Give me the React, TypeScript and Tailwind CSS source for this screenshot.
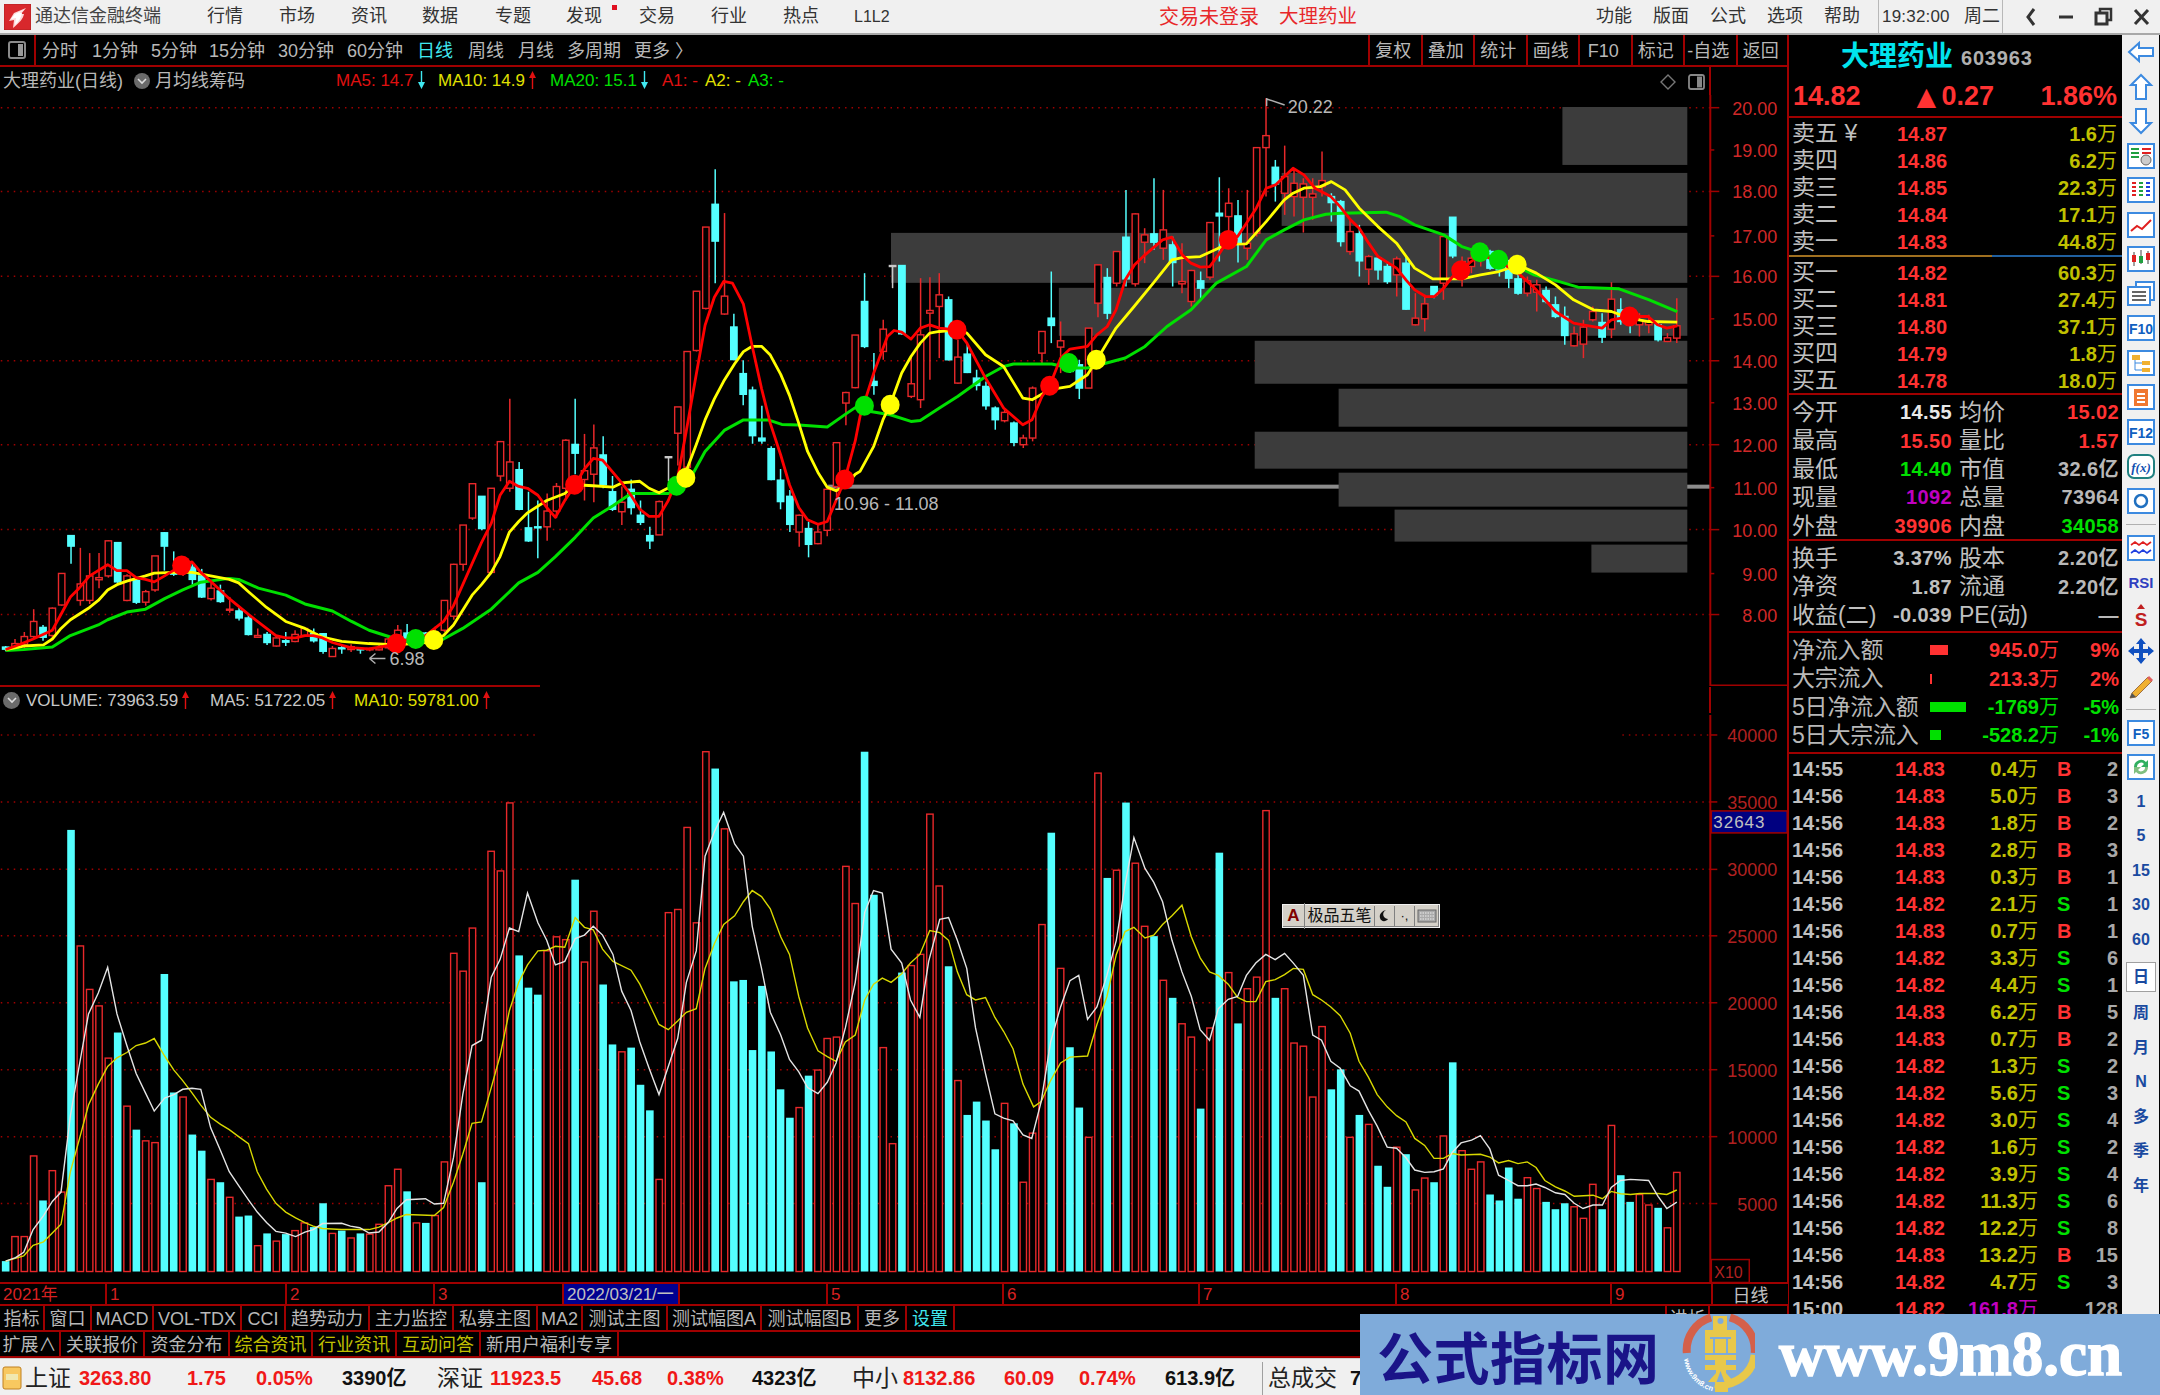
import React from "react";

const FONT = "[font-family:'Liberation_Sans','Noto_Sans_CJK_SC',sans-serif]";

// volume bar tops, negative = cyan (falling day)
const V1 = [-1515,1445,1445,1215,-1342,1257,1318,-285,616,740,787,936,-863,1073,-1140,1172,1177,-696,-1034,1047,-1154,-1200,1282,-1290,1333,-1388,-1385,1471,-1436,1458,-1438,1428,1406,-1418,-1350,1436,-1428,1449,-1436,1438,1410,1300,1253,-1316,1406,-1406,1385,1232,637,688,565,-1290,346,402,208,-643,-735,-755,630,590,598,-427,662,517,-726,-897,918,-906,-1012,-1085,1282,521,512,278,550,62,-110,282,-717,-713,-913,-730,-917,-1025,-1106,1077,-986,970,880,876,389,495];
const V2 = [-62,-470,906,1180,-692,672,640,240,445,-674,1000,-1098,-1060,-1114,-1196,1065,-1122,1290,1150,555,-293,680,-905,-1077,1162,123,-422,400,-207,380,560,-588,714,-764,838,876,-1080,850,-350,692,-837,738,705,230,-764,738,893,902,1047,846,-1025,-968,1162,-1098,1125,-1243,-1303,1190,-1210,1312,1278,-1290,1158,-948,1200,1253,1232,-1325,-1342,-1248,-1337,1277,1308,-1346,-1367,-1350,1360,1393,1296,-1367,1128,-1270,-1346,1325,1355,-1363,1420,1262];
const VOL = [...V1, ...V2];
const barX = (i: number) => 4.9 + i * 9.344;

// candles: high, body top, body bottom, low
const C1 = [[1415,1418,1424,1430],[1395,1408,1425,1428],[1375,1388,1410,1420],[1310,1345,1388,1395],[1355,1362,1390,1400],[1305,1307,1385,1395],[1208,1208,1298,1300],[1100,1100,1130,1180],[1135,1238,1285,1300],[1150,1215,1285,1295],[1150,1220,1226,1250],[1113,1115,1215,1220],[1120,1120,1232,1235],[1210,1215,1285,1287],[1225,1228,1290,1295],[1255,1260,1290,1300],[1158,1158,1255,1260],[1090,1092,1130,1200],[1145,1205,1210,1215],[1165,1170,1205,1215],[1180,1190,1225,1240],[1195,1215,1275,1278],[1235,1250,1280,1285],[1240,1258,1288,1292],[1275,1310,1313,1320],[1305,1315,1335,1342],[1325,1335,1382,1385],[1365,1385,1390,1392],[1375,1382,1405,1412],[1385,1392,1415,1417],[1375,1400,1404,1415],[1370,1382,1402,1404],[1362,1365,1385,1388],[1365,1380,1400,1405],[1378,1380,1430,1437],[1415,1422,1445,1445],[1410,1420,1423,1437],[1410,1417,1425,1432],[1420,1423,1426,1437],[1420,1422,1426,1430],[1410,1420,1426,1428],[1390,1395,1420,1425],[1355,1370,1410,1420],[1352,1378,1400,1405],[1375,1380,1395,1405],[1375,1378,1400,1405],[1360,1375,1395,1400],[1285,1285,1370,1375],[1180,1182,1330,1340],[1070,1070,1182,1200],[950,952,1050,1055],[988,988,1080,1085],[965,965,1205,1210],[830,832,930,945],[710,890,965,975],[890,912,1025,1028],[975,1078,1115,1118],[1000,1075,1078,1165],[980,1030,1075,1115],[950,960,1030,1050],[825,828,965,1000],[710,840,865,925],[810,915,940,1000],[783,850,925,1005],[817,870,955,965],[930,975,1025,1030],[960,1005,1032,1070],[940,968,1020,1040],[1000,1042,1062,1070],[1075,1100,1115,1138],[1000,1003,1098,1098],[875,875,877,945],[733,733,808,900],[575,575,905,910],[403,403,572,575],[220,220,452,455],[55,155,260,380],[180,417,468,470],[467,505,598,600],[600,638,697,728],[675,685,815,838],[730,822,830,838],[845,852,940,942],[910,942,1003,1025],[970,988,1068,1090],[1040,1042,1090,1132],[1060,1080,1125,1162],[1070,1090,1123,1125],[965,968,1085,1102],[835,835,960,990],[690,692,722,785],[528,528,678,680]];
const C2 = [[580,665,800,805],[820,905,917,945],[720,748,815,840],[557,557,558,625],[557,557,762,765],[830,912,950,955],[595,765,960,985],[592,692,700,900],[580,645,680,835],[650,660,840,842],[780,832,910,912],[790,823,878,880],[870,895,917,932],[905,920,978,990],[980,985,1020,1050],[985,998,1023,1028],[1025,1030,1088,1100],[1065,1075,1095,1105],[920,925,1075,1085],[755,755,820,855],[575,715,737,790],[725,783,802,880],[825,830,875,880],[840,855,925,958],[745,745,925,925],[555,555,670,712],[565,593,700,718],[515,515,610,620],[330,472,597,620],[400,402,612,620],[445,465,487,550],[295,462,487,510],[330,450,505,540],[470,495,548,620],[490,605,612,640],[570,572,665,680],[575,603,625,660],[428,428,592,600],[292,400,408,545],[325,370,410,465],[360,408,490,548],[330,490,505,540],[203,203,460,470],[55,167,203,350],[240,262,312,365],[197,290,340,405],[265,310,350,410],[295,312,352,458],[295,342,352,420],[215,302,320,350],[340,350,368,425],[360,365,485,500],[420,455,515,525],[435,462,543,590],[525,530,568,615],[530,535,570,600],[550,560,605,612],[530,537,585,650],[530,550,688,690],[640,715,735,737],[645,672,717,755],[620,620,645,655],[470,470,610,660],[412,412,528,535],[530,545,590,620],[510,535,560,580],[500,510,540,560],[510,515,565,570],[520,525,570,590],[540,560,595,625],[560,597,640,645],[590,603,640,650],[600,615,637,695],[620,632,665,670],[650,675,710,715],[680,710,767,795],[740,762,798,800],[720,742,793,835],[680,695,720,725],[700,728,772,790],[607,658,748,775],[655,690,725,735],[700,710,720,760],[700,720,735,770],[705,725,735,760],[730,735,780,785],[760,774,785,787],[655,738,775,790]];

const zx6 = (x: number) => x / 1.823;
const zy6 = (y: number) => 150 + y / 2.85;
const zx7 = (x: number) => 860 + x / 1.823;
const zy7 = (y: number) => 80 + y / 3;
const zy8 = (y: number) => 730 + y / 2.85;
const zx9 = (x: number) => 860 + x / 1.704;

const pts = (a: number[], fx: (n: number) => number, fy: (n: number) => number) => {
  let s = "";
  for (let i = 0; i < a.length; i += 2) s += `${fx(a[i]).toFixed(1)},${fy(a[i + 1]).toFixed(1)} `;
  return s;
};

const MA5 = pts([9,1425,27,1415,59,1395,94,1370,127,1275,143,1250,162,1215,195,1183,212,1200,230,1200,247,1220,264,1225,280,1232,299,1215,330,1185,349,1175,365,1205,383,1230,417,1280,452,1325,485,1365,502,1385,520,1392,538,1392,555,1385,570,1385,587,1392,605,1405,638,1420,672,1423,722,1410,740,1398,775,1385,808,1345,826,1300,860,1180,877,1120,895,1065,911,985,928,945,945,960,961,965,980,985,996,1020,1012,1048,1029,1000,1048,955,1065,910,1081,880,1098,885,1117,920,1133,950,1150,985,1166,1025,1183,1045,1201,1045,1218,1000,1235,935,1251,800,1269,640,1285,500,1302,420,1319,375,1335,380,1355,440,1371,560,1388,680,1404,780,1423,870,1439,955,1456,1020,1472,1055,1491,1068,1508,1060,1524,1000,1540,940,1559,830], zx6, zy6)
  + pts([0,1010,25,880,50,770,62,752,76,757,93,778,110,745,127,735,145,745,177,750,195,790,229,895,262,985,297,1035,314,1020,332,950,346,918,366,835,383,808,415,800,432,765,451,740,467,690,484,600,501,555,520,525,552,480,569,472,588,525,604,550,621,562,638,560,654,525,672,480,689,470,705,430,723,385,741,325,758,315,790,265,810,285,830,325,859,350,876,380,895,420,911,445,928,490,945,530,979,565,996,600,1012,630,1032,650,1048,650,1065,625,1081,590,1098,570,1115,545,1132,525,1166,545,1201,580,1234,630,1269,695,1302,730,1319,735,1354,745,1371,720,1404,710,1438,710,1455,735,1472,745,1491,738], zx7, zy7);
const MA10 = pts([9,1425,42,1415,78,1412,94,1395,110,1365,127,1340,162,1305,178,1285,195,1255,212,1240,230,1230,264,1215,280,1207,316,1205,349,1205,383,1215,417,1225,434,1235,452,1260,485,1305,520,1345,555,1365,587,1390,622,1402,672,1408,722,1412,775,1405,808,1385,826,1355,860,1270,877,1240,895,1205,911,1160,928,1090,945,1060,961,1035,996,1000,1029,980,1048,955,1081,958,1117,962,1133,950,1166,945,1183,965,1201,978,1235,950,1251,915,1269,840,1285,770,1302,710,1319,660,1339,610,1355,575,1371,560,1388,560,1404,585,1423,640,1439,700,1456,780,1472,860,1491,920,1508,962,1524,972,1540,960,1559,925], zx6, zy6)
  + pts([0,1175,25,1100,42,1020,55,975,76,880,93,830,110,790,127,760,145,755,177,750,195,760,229,825,262,860,297,955,314,960,346,930,383,920,415,885,432,840,467,745,500,680,535,610,569,540,588,533,621,530,654,505,672,493,705,492,741,425,774,360,790,340,810,325,840,320,860,305,885,330,911,385,945,440,979,490,1012,565,1045,597,1098,597,1132,585,1166,575,1201,555,1234,580,1269,615,1302,660,1338,690,1371,695,1404,715,1438,725,1491,727], zx7, zy7);
const MA20 = pts([9,1428,42,1425,94,1418,127,1385,178,1355,195,1340,230,1318,264,1310,299,1280,332,1255,365,1233,417,1222,434,1225,470,1250,520,1270,555,1295,605,1315,640,1345,672,1370,722,1395,775,1405,808,1395,843,1365,895,1310,945,1235,980,1205,1012,1160,1048,1105,1081,1050,1117,1015,1150,980,1218,980,1250,960,1285,860,1320,800,1355,770,1400,770,1425,783,1456,785,1508,790,1540,755,1559,735], zx6, zy6)
  + pts([0,990,55,1005,93,1025,110,1022,145,985,178,950,229,890,262,860,280,853,350,853,383,865,415,865,450,850,484,835,520,800,560,740,604,690,650,610,705,560,741,480,774,450,810,420,850,403,876,400,960,397,985,410,1012,435,1065,465,1098,500,1132,518,1166,540,1200,560,1230,585,1265,600,1310,622,1385,627,1440,660,1491,695], zx7, zy7);

const VWHITE = pts([9,1515,27,1505,42,1490,59,1425,78,1385,94,1345,110,1318,127,1100,143,960,160,810,178,750,195,677,212,810,230,900,247,980,264,1035,280,1087,299,1050,316,1040,332,1025,349,1022,365,1025,383,1135,401,1200,417,1260,434,1300,452,1340,468,1375,485,1405,502,1430,520,1435,538,1445,555,1432,570,1425,587,1408,622,1407,638,1415,655,1420,672,1435,690,1432,707,1405,723,1365,740,1340,775,1337,791,1352,808,1350,826,1220,843,1040,860,900,877,885,895,705,911,655,928,565,945,575,961,465,980,550,996,600,1012,670,1029,660,1048,595,1065,585,1081,560,1098,585,1117,640,1133,745,1150,800,1166,890,1183,965,1201,1040,1218,960,1235,880,1251,720,1269,630,1285,360,1302,290,1319,235,1339,325,1355,360,1371,560,1388,680,1404,805,1423,870,1439,940,1456,975,1472,1020,1491,1037,1508,1005,1524,950,1541,850,1559,720], zx6, zy8)
  + pts([8,520,23,458,38,465,53,625,71,665,86,770,102,820,117,660,136,540,151,535,166,600,182,680,197,850,214,980,230,1095,245,1107,261,1115,278,1155,293,1165,309,1060,325,890,342,790,358,715,373,700,388,825,404,790,421,700,437,600,452,440,467,307,486,395,501,435,516,490,532,600,549,690,565,760,580,855,596,885,611,795,628,768,644,760,659,700,675,665,692,640,708,655,724,637,739,665,756,700,772,870,787,885,803,945,819,965,836,1015,851,1030,867,1085,882,1130,899,1190,915,1193,931,1220,946,1255,963,1262,979,1260,995,1252,1010,1205,1025,1178,1043,1170,1058,1157,1074,1195,1089,1270,1106,1285,1122,1300,1138,1300,1153,1295,1168,1305,1186,1320,1202,1325,1218,1350,1233,1365,1250,1355,1266,1355,1281,1305,1297,1285,1314,1282,1345,1285,1361,1330,1376,1365,1393,1347], zx9, zy8);
const VYELLOW = pts([9,1515,42,1500,59,1470,78,1460,94,1435,110,1410,127,1260,143,1170,160,1070,178,1010,195,960,212,935,230,920,247,900,264,893,280,880,299,930,316,970,332,1000,349,1035,365,1070,383,1105,401,1125,417,1140,434,1160,452,1180,468,1260,485,1310,502,1350,520,1375,538,1392,555,1405,570,1415,587,1422,622,1425,672,1425,690,1418,707,1405,723,1392,740,1382,791,1385,808,1362,826,1290,843,1210,860,1122,877,1118,895,1020,911,930,928,800,945,720,961,670,980,630,996,628,1012,617,1029,620,1048,535,1065,563,1081,570,1098,625,1117,660,1150,685,1166,725,1183,780,1201,840,1218,855,1235,830,1251,805,1269,795,1285,680,1302,610,1319,555,1339,530,1355,490,1371,458,1388,475,1404,510,1423,590,1439,640,1456,760,1472,850,1491,915,1508,932,1524,945,1541,890,1559,870], zx6, zy8)
  + pts([8,770,23,725,38,708,53,720,71,695,86,665,102,640,119,572,136,578,151,600,166,690,182,755,197,770,214,763,230,820,245,860,261,910,278,1010,296,1075,309,1060,325,1000,342,950,358,933,388,930,404,840,421,760,437,640,452,575,467,563,486,593,501,585,516,555,532,530,549,500,565,590,580,650,596,690,611,700,628,725,644,763,659,775,675,775,692,718,708,712,724,698,739,680,756,683,772,755,787,770,803,790,819,815,836,865,851,945,867,990,882,1040,899,1075,915,1100,931,1118,946,1165,963,1185,979,1222,995,1222,1010,1208,1025,1212,1058,1210,1074,1218,1089,1235,1106,1228,1122,1237,1138,1232,1153,1248,1168,1285,1186,1303,1202,1315,1218,1330,1250,1327,1266,1337,1281,1316,1297,1323,1314,1325,1330,1322,1361,1322,1376,1325,1393,1312], zx9, zy8);

const DOTS: [number, number, string][] = [
  [zx6(330), zy6(1185), "#ff0000"], [zx6(722), zy6(1408), "#ff0000"], [zx6(757), zy6(1395), "#00e000"], [zx6(790), zy6(1398), "#ffff00"],
  [zx6(1047), zy6(955), "#ff0000"], [zx6(1233), zy6(958), "#00e000"], [zx6(1250), zy6(935), "#ffff00"], [zx6(1540), zy6(940), "#ff0000"],
  [zx7(8), zy7(978), "#00e000"], [zx7(55), zy7(975), "#ffff00"], [zx7(177), zy7(750), "#ff0000"], [zx7(346), zy7(918), "#ff0000"],
  [zx7(381), zy7(850), "#00e000"], [zx7(431), zy7(840), "#ffff00"], [zx7(672), zy7(480), "#ff0000"], [zx7(1096), zy7(572), "#ff0000"],
  [zx7(1131), zy7(517), "#00e000"], [zx7(1165), zy7(540), "#00e000"], [zx7(1199), zy7(555), "#ffff00"], [zx7(1404), zy7(710), "#ff0000"],
];

const PROFILE = [[1563,107,165],[1282,173,226],[891,233,283],[1059,288,336],[1255,341,384],[1339,389,427],[1255,432,469],[1339,473,507],[1395,510,542],[1592,545,573]];
const PRICE_AXIS: [string, number, boolean][] = [["20.00",107.7,true],["19.00",150,false],["18.00",191.5,true],["17.00",236,false],["16.00",276.5,true],["15.00",319,false],["14.00",361,true],["13.00",403,false],["12.00",445,true],["11.00",488,false],["10.00",530,true],["9.00",574,false],["8.00",615,true]];
const VOL_AXIS: [string, number][] = [["40000",735],["35000",802],["30000",869.5],["25000",936],["20000",1003],["15000",1070],["10000",1137],["5000",1204]];

function KChart() {
  const all = [...C1.map((c) => c.map(zy6)), ...C2.map((c) => c.map(zy7))];
  return (
    <svg className="block w-[1788px] h-[592px]" viewBox="0 95 1788 592">
      {PRICE_AXIS.filter((a) => a[2]).map((a) => (
        <line key={a[0]} x1="0" x2="1711" y1={a[1]} y2={a[1]} stroke="#a00000" strokeWidth="1.5" strokeDasharray="1.5 5" />
      ))}
      <rect x="828" y="485" width="883" height="4" fill="#8c8c8c" />
      {PROFILE.map((p, i) => (
        <rect key={i} x={p[0]} y={p[1]} width={1688 - p[0]} height={p[2] - p[1]} fill="#3c3c3c" />
      ))}
      {all.map((c, i) => {
        const x = barX(i);
        const white = i === 71 || i === 95;
        const up = VOL[i] > 0;
        const col = white ? "#c8c8c8" : up ? "#e8282a" : "#54ffff";
        return (
          <g key={i}>
            <line x1={x} x2={x} y1={c[0]} y2={c[3]} stroke={col} strokeWidth="1.5" />
            <rect x={x - 3.2} y={c[1]} width={6.4} height={Math.max(c[2] - c[1], 1)} fill={up ? "#000" : col} stroke={col} strokeWidth={1.4} />
          </g>
        );
      })}
      <polyline points={MA20} fill="none" stroke="#00e000" strokeWidth="3" strokeLinejoin="round" />
      <polyline points={MA10} fill="none" stroke="#ffff00" strokeWidth="2.8" strokeLinejoin="round" />
      <polyline points={MA5} fill="none" stroke="#ff0000" strokeWidth="2.8" strokeLinejoin="round" />
      {DOTS.map((d, i) => (
        <ellipse key={i} cx={d[0]} cy={d[1]} rx="9.5" ry="10" fill={d[2]} />
      ))}
      <line x1="1711" x2="1711" y1="95" y2="687" stroke="#a00000" strokeWidth="2" />
      {PRICE_AXIS.map((a) => (
        <g key={a[0]}>
          <line x1="1711" x2={a[2] ? 1720 : 1715} y1={a[1]} y2={a[1]} stroke="#a00000" strokeWidth="1.5" />
          <text x="1778" y={a[1] + 7} textAnchor="end" fontSize="18" fill="#d02828" fontFamily="Liberation Sans">{a[0]}</text>
        </g>
      ))}
      <path d="M1267 98v8M1267 99l18 6" stroke="#b0b0b0" strokeWidth="1.4" fill="none" />
      <text x="1288" y="113" fontSize="18" fill="#b8b8b8" fontFamily="Liberation Sans">20.22</text>
      <path d="M369 659h16M369 659l6-5M369 659l6 5" stroke="#b0b0b0" strokeWidth="1.4" fill="none" />
      <text x="389" y="666" fontSize="18" fill="#b8b8b8" fontFamily="Liberation Sans">6.98</text>
      <text x="834" y="510" fontSize="18" fill="#b8b8b8" fontFamily="Liberation Sans">10.96 - 11.08</text>
      <line x1="1711" x2="1788" y1="686" y2="686" stroke="#a00000" strokeWidth="2" />
    </svg>
  );
}

function VolChart() {
  return (
    <svg className="block w-[1788px] h-[568px]" viewBox="0 715 1788 568">
      {VOL_AXIS.map((a, i) => (
        i === 0 ? (
          <g key={a[0]}>
            <line x1="0" x2="537" y1={a[1]} y2={a[1]} stroke="#900000" strokeWidth="1.5" strokeDasharray="1.5 5" />
            <line x1="1623" x2="1711" y1={a[1]} y2={a[1]} stroke="#900000" strokeWidth="1.5" strokeDasharray="1.5 5" />
          </g>
        ) : (
          <line key={a[0]} x1="0" x2="1711" y1={a[1]} y2={a[1]} stroke="#a00000" strokeWidth="1.5" strokeDasharray="1.5 5" />
        )
      ))}
      {VOL.map((t, i) => {
        const y = zy8(Math.abs(t));
        const x = barX(i);
        return t < 0 ? (
          <rect key={i} x={x - 3.8} y={y} width={7.6} height={1272 - y} fill="#54ffff" />
        ) : (
          <rect key={i} x={x - 3.2} y={y} width={6.4} height={1272 - y} fill="#000" stroke="#e8282a" strokeWidth="1.4" />
        );
      })}
      <polyline points={VYELLOW} fill="none" stroke="#d8d800" strokeWidth="1.4" />
      <polyline points={VWHITE} fill="none" stroke="#e4e4e4" strokeWidth="1.4" />
      <line x1="1711" x2="1711" y1="715" y2="1283" stroke="#a00000" strokeWidth="2" />
      {VOL_AXIS.map((a) => (
        <g key={a[0]}>
          <line x1="1711" x2="1718" y1={a[1]} y2={a[1]} stroke="#a00000" strokeWidth="1.5" />
          <text x="1778" y={a[1] + 7} textAnchor="end" fontSize="18" fill="#b02020" fontFamily="Liberation Sans">{a[0]}</text>
        </g>
      ))}
      <rect x="1712" y="811" width="76" height="22" fill="#000080" stroke="#a00000" strokeWidth="1.5" />
      <text x="1714" y="828" fontSize="17" letterSpacing="1" fill="#c0c0c0" fontFamily="Liberation Sans">32643</text>
      <rect x="1712" y="1260" width="38" height="23" fill="#000" stroke="#a00000" strokeWidth="1.5" />
      <text x="1715" y="1278" fontSize="16" fill="#b02020" fontFamily="Liberation Sans">X10</text>
    </svg>
  );
}

function Arr({ up, c }: { up?: boolean; c: string }) {
  return (
    <svg width="9" height="20" viewBox="0 0 9 20" className="inline-block mx-[3px] align-[-4px]">
      {up ? <path d="M4.5 1L8 8H5.2V19H3.8V8H1z" fill={c} /> : <path d="M4.5 19L8 12H5.2V1H3.8V12H1z" fill={c} />}
    </svg>
  );
}

function TitleBar() {
  const menu: [string, string][] = [["行情", "w-[72px]"], ["市场", "w-[72px]"], ["资讯", "w-[71px]"], ["数据", "w-[73px]"], ["专题", "w-[71px]"], ["发现", "w-[73px]"], ["交易", "w-[72px]"], ["行业", "w-[72px]"], ["热点", "w-[71px]"], ["L1L2", "w-[80px] text-[16px]"]];
  return (
    <div className="h-[35px] bg-[#f0f0f0] border-b-2 border-[#a8a8a8] flex items-center text-[18px] text-[#333] shrink-0">
      <div className="w-[35px] pl-[4px]">
        <svg width="27" height="26" viewBox="0 0 27 26">
          <rect width="27" height="26" fill="#d8282c" stroke="#b02020" />
          <path d="M22 4 L10 9 L5 17 L10 16 L9 24 C16 18 19 15 20 10 L17 10z" fill="#ffd8d8" />
          <path d="M20 6 L11 10 L7 15 L12 14 L11 21 C15 17 17 14 18 9 L15 9z" fill="#fff" />
        </svg>
      </div>
      <div className="w-[172px] text-[#444]">通达信金融终端</div>
      {menu.map((m) => (
        <div key={m[0]} className={`${m[1]} relative`}>
          {m[0]}
          {m[0] === "发现" && <span className="absolute left-[46px] top-[2px] w-[5px] h-[5px] bg-[#e01020]" />}
        </div>
      ))}
      <div className="ml-[225px] w-[120px] text-[20px] text-[#e8282a]">交易未登录</div>
      <div className="text-[19.5px] text-[#e8282a]">大理药业</div>
      <div className="flex-1" />
      {["功能", "版面", "公式", "选项", "帮助"].map((m) => (
        <div key={m} className="w-[57px]">{m}</div>
      ))}
      <div className="h-[33px] w-[125px] border-x border-[#b8b8b8] flex items-center pl-[3px] -ml-[3px]">
        <span className="w-[82px] tracking-[0.2px] text-[17px]">19:32:00</span>
        <span>周二</span>
      </div>
      <div className="w-[157px] flex items-center text-[#222]">
        <svg width="157" height="24" viewBox="0 0 157 24" fill="none" stroke="#333" strokeWidth="3">
          <path d="M31 4l-6 8 6 8" />
          <path d="M56 12h14" />
          <rect x="93" y="8" width="11" height="11" />
          <path d="M97 8V4h11v11h-4" strokeWidth="2.5" />
          <path d="M132 5l13 14M145 5l-13 14" />
        </svg>
      </div>
    </div>
  );
}

function Toolbar() {
  const tabs: [string, string][] = [["分时", "w-[50px]"], ["1分钟", "w-[59px]"], ["5分钟", "w-[58px]"], ["15分钟", "w-[69px]"], ["30分钟", "w-[69px]"], ["60分钟", "w-[70px]"], ["日线", "w-[51px] text-[#40e8f0]"], ["周线", "w-[50px]"], ["月线", "w-[49px]"], ["多周期", "w-[67px]"], ["更多 〉", "w-[70px]"]];
  const btns = ["复权", "叠加", "统计", "画线", "F10", "标记", "-自选", "返回"];
  return (
    <div className="h-[32px] border-b-2 border-[#a00000] flex items-center text-[18px] text-[#b8b8b8] shrink-0">
      <div className="w-[36px] h-full border-r-2 border-[#a00000] flex items-center justify-center">
        <svg width="20" height="20" viewBox="0 0 20 20" fill="none">
          <rect x="2" y="2" width="16" height="16" rx="2" stroke="#8a8a8a" strokeWidth="2" />
          <rect x="11" y="4" width="5" height="12" fill="#9a9a9a" />
        </svg>
      </div>
      <div className="flex pl-[6px] pt-[2px]">
        {tabs.map((t) => (
          <div key={t[0]} className={t[1]}>{t[0]}</div>
        ))}
      </div>
      <div className="flex-1" />
      {btns.map((b) => (
        <div key={b} className="w-[52.5px] h-full text-center pr-[4px] border-l-2 border-[#a00000] leading-[33px]">{b}</div>
      ))}
    </div>
  );
}

function InfoRow() {
  return (
    <div className="h-[28px] flex items-center text-[17px] shrink-0 relative">
      <div className="w-[1711px] h-full flex items-center relative border-r-2 border-[#a00000]">
        <span className="w-[134px] pl-[3px] text-[18px] text-[#b8b8b8] whitespace-nowrap">大理药业(日线)</span>
        <span className="w-[16px] h-[16px] rounded-full bg-[#6a6a6a] mx-[2px] ml-[0px] flex items-center justify-center">
          <svg width="10" height="10" viewBox="0 0 10 10"><path d="M1 3l4 4 4-4" stroke="#ddd" strokeWidth="1.6" fill="none" /></svg>
        </span>
        <span className="ml-[3px] w-[181px] text-[18px] text-[#b8b8b8]">月均线筹码</span>
        <span className="text-[#e01010] w-[102px]">MA5: 14.7<Arr c="#40e8f0" /></span>
        <span className="text-[#e0e000] w-[112px]">MA10: 14.9<Arr up c="#e01010" /></span>
        <span className="text-[#00e000] w-[112px]">MA20: 15.1<Arr c="#40e8f0" /></span>
        <span className="text-[#e01010] w-[43px]">A1: -</span>
        <span className="text-[#e0e000] w-[43px]">A2: -</span>
        <span className="text-[#00e000]">A3: -</span>
        <svg className="absolute left-[1660px] top-[6px]" width="50" height="18" viewBox="0 0 50 18" fill="none">
          <path d="M8 2l7 7-7 7-7-7z" stroke="#777" strokeWidth="1.4" />
          <rect x="29" y="2" width="15" height="14" rx="2" stroke="#888" strokeWidth="1.8" />
          <rect x="37" y="3.5" width="5" height="11" fill="#888" />
        </svg>
      </div>
    </div>
  );
}

function VolHeader() {
  return (
    <div className="h-[28px] flex items-center text-[17px] shrink-0 pb-[2px]">
      <div className="w-[1711px] h-full flex items-center border-r-2 border-[#a00000]">
        <span className="ml-[3px] w-[17px] h-[17px] rounded-full bg-[#6a6a6a] flex items-center justify-center">
          <svg width="10" height="10" viewBox="0 0 10 10"><path d="M1 3l4 4 4-4" stroke="#ddd" strokeWidth="1.6" fill="none" /></svg>
        </span>
        <span className="ml-[6px] w-[184px] text-[#c8c8c8] whitespace-nowrap">VOLUME: 73963.59<Arr up c="#e01010" /></span>
        <span className="w-[144px] text-[#c8c8c8] whitespace-nowrap">MA5: 51722.05<Arr up c="#e01010" /></span>
        <span className="text-[#e0e000] whitespace-nowrap">MA10: 59781.00<Arr up c="#e01010" /></span>
      </div>
    </div>
  );
}

function DateRow() {
  const segs: [string, string][] = [["2021年", "w-[105px]"], ["1", "w-[180px]"], ["2", "w-[148px]"], ["3", "w-[129px]"], ["2022/03/21/一", "w-[116px]"], ["", "w-[148px]"], ["5", "w-[176px]"], ["6", "w-[196px]"], ["7", "w-[197px]"], ["8", "w-[215px]"], ["9", "w-[101px]"]];
  return (
    <div className="h-[24px] flex border-y-2 border-[#a00000] text-[17px] text-[#d82020] leading-[22px] shrink-0 -mt-[1px] relative z-10 bg-black">
      {segs.map((s, i) => (
        <div key={i} className={`${s[1]} h-full pl-[3px] whitespace-nowrap ${i > 0 ? "border-l-2 border-[#a00000]" : ""} ${s[0].startsWith("2022") ? "bg-[#000090] text-[#c0c0c0] pl-[1px]" : ""}`}>{s[0]}</div>
      ))}
      <div className="flex-1 border-l-2 border-[#a00000] text-center text-[#c0c0c0] text-[18px] leading-[24px]">日线</div>
    </div>
  );
}

function TabRow({ items, cut }: { items: [string, number, string?][]; cut?: boolean }) {
  return (
    <div className="h-[26px] flex border-b-2 border-[#a00000] text-[18px] text-[#b8b8b8] leading-[27px] shrink-0 relative">
      {items.map((t) => (
        <div key={t[0]} style={{ width: t[1] }} className={`h-full text-center border-r-2 border-[#a00000] whitespace-nowrap overflow-hidden ${t[2] ?? ""}`}>{t[0]}</div>
      ))}
      {cut && <div className="absolute left-[1665px] top-[0px] h-full w-[45px] border-x-2 border-[#a00000] text-center whitespace-nowrap overflow-hidden">讲析</div>}
    </div>
  );
}

function Levels() {
  const sell = [["卖五 ¥", "14.87", "1.6"], ["卖四", "14.86", "6.2"], ["卖三", "14.85", "22.3"], ["卖二", "14.84", "17.1"], ["卖一", "14.83", "44.8"]];
  const buy = [["买一", "14.82", "60.3"], ["买二", "14.81", "27.4"], ["买三", "14.80", "37.1"], ["买四", "14.79", "1.8"], ["买五", "14.78", "18.0"]];
  const row = (r: string[]) => (
    <div key={r[0]} className="h-[27px] flex items-center">
      <span className="w-[108px] pl-[3px] text-[23px] text-[#c0c0c0] whitespace-nowrap">{r[0]}</span>
      <span className="w-[52px] text-[20px] text-[#ff3232] font-semibold">{r[1]}</span>
      <span className="flex-1 text-right pr-[5px] text-[20px] font-semibold text-[#c0c000] whitespace-nowrap">{r[2]}<span className="text-[20px] font-normal">万</span></span>
    </div>
  );
  return (
    <>
      <div className="pt-[2px] h-[137px]">{sell.map(row)}</div>
      <div className="h-[2px] flex"><div className="w-[203px] bg-[#a07020]" /><div className="flex-1 bg-[#2060a0]" /></div>
      <div className="pt-[2px] h-[138px] border-b-2 border-[#a00000]">{buy.map(row)}</div>
    </>
  );
}

function Stat({ a, b, c, d, bc, dc }: { a: string; b: string; c: string; d: string; bc: string; dc: string }) {
  return (
    <div className="h-[28.4px] flex items-center">
      <span className="w-[80px] pl-[3px] text-[23px] text-[#c0c0c0] whitespace-nowrap">{a}</span>
      <span className={`w-[83px] text-right text-[20px] font-semibold tracking-[0.4px] whitespace-nowrap ${bc}`}>{b}</span>
      <span className="ml-[7px] w-[75px] text-[23px] text-[#c0c0c0] whitespace-nowrap">{c}</span>
      <span className={`w-[85px] text-right text-[20px] font-semibold tracking-[0.4px] whitespace-nowrap ${dc}`}>{d}</span>
    </div>
  );
}

function Flow({ l, w, v, p, red }: { l: string; w: number; v: string; p: string; red: boolean }) {
  const tx = red ? "text-[#ff3232]" : "text-[#00e000]";
  return (
    <div className="h-[28.4px] flex items-center">
      <span className="w-[141px] pl-[3px] text-[23px] tracking-[-0.2px] text-[#b8b8b8] whitespace-nowrap">{l}</span>
      <span className="w-[42px] flex items-center">
        <span style={{ width: w }} className={`h-[10px] ${red ? "bg-[#ff3232]" : "bg-[#00e000]"}`} />
      </span>
      <span className={`w-[87px] text-right text-[20px] font-semibold whitespace-nowrap ${tx}`}>{v}<span className="font-normal">万</span></span>
      <span className={`flex-1 text-right pr-[3px] text-[20px] font-semibold ${tx}`}>{p}</span>
    </div>
  );
}

const TRADES: [string, string, string, string, string][] = [
  ["14:55","14.83","0.4","B","2"],["14:56","14.83","5.0","B","3"],["14:56","14.83","1.8","B","2"],["14:56","14.83","2.8","B","3"],["14:56","14.83","0.3","B","1"],["14:56","14.82","2.1","S","1"],["14:56","14.83","0.7","B","1"],["14:56","14.82","3.3","S","6"],["14:56","14.82","4.4","S","1"],["14:56","14.83","6.2","B","5"],["14:56","14.83","0.7","B","2"],["14:56","14.82","1.3","S","2"],["14:56","14.82","5.6","S","3"],["14:56","14.82","3.0","S","4"],["14:56","14.82","1.6","S","2"],["14:56","14.82","3.9","S","4"],["14:56","14.82","11.3","S","6"],["14:56","14.82","12.2","S","8"],["14:56","14.83","13.2","B","15"],["14:56","14.82","4.7","S","3"],["15:00","14.82","161.8","","128"],
];

function RightPanel() {
  return (
    <div className="w-[335px] h-full border-l-2 border-[#a00000] -ml-[1px] shrink-0 overflow-hidden bg-black">
      <div className="h-[43px] flex items-center pl-[52px]">
        <span className="text-[28px] text-[#00e4ee] font-semibold leading-none">大理药业</span>
        <span className="ml-[8px] text-[20px] font-semibold tracking-[0.8px] text-[#b0b0b0] mt-[3px]">603963</span>
      </div>
      <div className="h-[40px] flex items-center justify-between border-b-2 border-[#a00000] pl-[4px] pr-[5px] text-[27px] font-bold text-[#ff3232] leading-none pb-[2px]">
        <span>14.82</span><span className="ml-[3px] flex items-center"><span className="text-[33px] -mr-[1px]">▲</span>0.27</span><span>1.86%</span>
      </div>
      <Levels />
      <div className="pt-[3px] h-[146px] border-b-2 border-[#a00000]">
        <Stat a="今开" b="14.55" c="均价" d="15.02" bc="text-[#e8e8e8]" dc="text-[#ff3232]" />
        <Stat a="最高" b="15.50" c="量比" d="1.57" bc="text-[#ff3232]" dc="text-[#ff3232]" />
        <Stat a="最低" b="14.40" c="市值" d="32.6亿" bc="text-[#00e000]" dc="text-[#b8b8b8]" />
        <Stat a="现量" b="1092" c="总量" d="73964" bc="text-[#c000c0]" dc="text-[#b8b8b8]" />
        <Stat a="外盘" b="39906" c="内盘" d="34058" bc="text-[#ff3232]" dc="text-[#00e000]" />
      </div>
      <div className="pt-[3px] h-[92px] border-b-2 border-[#a00000]">
        <Stat a="换手" b="3.37%" c="股本" d="2.20亿" bc="text-[#c0c0c0]" dc="text-[#b8b8b8]" />
        <Stat a="净资" b="1.87" c="流通" d="2.20亿" bc="text-[#c0c0c0]" dc="text-[#b8b8b8]" />
        <Stat a="收益(二)" b="-0.039" c="PE(动)" d="—" bc="text-[#c0c0c0]" dc="text-[#b8b8b8]" />
      </div>
      <div className="pt-[3px] h-[121px] border-b-2 border-[#a00000]">
        <Flow l="净流入额" w={18} v="945.0" p="9%" red />
        <Flow l="大宗流入" w={2} v="213.3" p="2%" red />
        <Flow l="5日净流入额" w={36} v="-1769" p="-5%" red={false} />
        <Flow l="5日大宗流入" w={11} v="-528.2" p="-1%" red={false} />
      </div>
      <div className="pt-[1px]">
        {TRADES.map((t, i) => (
          <div key={i} className="h-[27px] flex items-center text-[20px] font-semibold">
            <span className="w-[63px] pl-[3px] text-[#c0c0c0]">{t[0]}</span>
            <span className="w-[93px] text-right text-[#ff3232]">{t[1]}</span>
            <span className={`w-[93px] text-right whitespace-nowrap ${t[3] ? "text-[#c0c000]" : "text-[#c000c0]"}`}>{t[2]}<span className="font-normal">万</span></span>
            <span className={`ml-[19px] w-[20px] ${t[3] === "B" ? "text-[#ff3232]" : "text-[#00e000]"}`}>{t[3]}</span>
            <span className="flex-1 text-right pr-[4px] text-[#a8a8a8]">{t[4]}</span>
          </div>
        ))}
      </div>
    </div>
  );
}

const B = "#3c8ae0";
function Box({ children }: { children: React.ReactNode }) {
  return (
    <svg width="28" height="28" viewBox="0 0 28 28">
      <rect x="1" y="2" width="26" height="24" fill="#fff" stroke={B} strokeWidth="2" />
      {children}
    </svg>
  );
}
const Arrow = ({ d }: { d: string }) => (
  <svg width="28" height="28" viewBox="0 0 28 28"><path d={d} fill="#fff" stroke={B} strokeWidth="2" strokeLinejoin="miter" /></svg>
);
const Txt = ({ t, c = "#1060c0" }: { t: string; c?: string }) => (
  <text x="14" y="20" textAnchor="middle" fontSize="14" fontWeight="700" fill={c} fontFamily="Liberation Sans">{t}</text>
);

const ICONS: React.ReactNode[] = [
  <Arrow d="M2 14L12 5v5h14v8H12v5z" />,
  <Arrow d="M14 2l10 10h-5v14H9V12H4z" />,
  <Arrow d="M14 26L4 16h5V2h10v14h5z" />,
  <Box><path d="M4 7h8M4 11h8M4 15h8" stroke="#20a040" strokeWidth="2" /><path d="M15 7h9M15 11h9" stroke="#e02020" strokeWidth="2" /><circle cx="19" cy="18" r="5" fill="#ccc" stroke="#666" /></Box>,
  <Box><path d="M5 7h4M5 11h4M5 15h4M5 19h4" stroke="#e02020" strokeWidth="2" /><path d="M12 7h4M12 11h4M12 15h4M12 19h4" stroke="#20a040" strokeWidth="2" /><path d="M19 7h4M19 11h4M19 15h4M19 19h4" stroke="#2040e0" strokeWidth="2" /></Box>,
  <Box><path d="M4 20l6-5 5 3 9-9" stroke="#e02020" strokeWidth="2" fill="none" /></Box>,
  <Box><path d="M7 7v14M14 5v14M21 6v13" stroke="#444" /><rect x="5" y="10" width="4" height="7" fill="#e02020" /><rect x="12" y="11" width="4" height="7" fill="#20a040" /><rect x="19" y="8" width="4" height="7" fill="#e02020" /></Box>,
  <svg width="28" height="28" viewBox="0 0 28 28"><rect x="9" y="2" width="18" height="18" fill="#fff" stroke={B} strokeWidth="2" /><rect x="1" y="7" width="22" height="18" fill="#fff" stroke={B} strokeWidth="2" /><path d="M5 12h14M5 16h14M5 20h14" stroke="#666" strokeWidth="2" /></svg>,
  <Box><Txt t="F10" /></Box>,
  <Box><rect x="5" y="6" width="8" height="5" fill="#f0b030" /><rect x="15" y="12" width="8" height="4" fill="#f0b030" /><rect x="15" y="19" width="8" height="4" fill="#f0b030" /><path d="M8 11v10h7M8 14h7" stroke={B} fill="none" /></Box>,
  <Box><rect x="7" y="6" width="14" height="17" fill="#f07830" /><path d="M10 11h8M10 15h8M10 19h8" stroke="#fff" strokeWidth="2" /></Box>,
  <Box><Txt t="F12" /></Box>,
  <svg width="28" height="28" viewBox="0 0 28 28"><rect x="1" y="3" width="26" height="23" rx="6" fill="#fff" stroke="#208080" strokeWidth="2" /><text x="14" y="20" textAnchor="middle" fontSize="13" fontStyle="italic" fontWeight="700" fill="#1050b0" fontFamily="Liberation Serif">f(x)</text></svg>,
  <Box><circle cx="14" cy="14" r="6" fill="none" stroke="#2070c0" strokeWidth="2.5" /></Box>,
];
const ICONS2: React.ReactNode[] = [
  <Box><path d="M4 11l4-3 4 3 4-3 4 3 4-3" stroke="#e02020" strokeWidth="1.6" fill="none" /><path d="M4 19l4-3 4 3 4-3 4 3 4-3" stroke="#2040e0" strokeWidth="1.6" fill="none" /></Box>,
  <svg width="28" height="28" viewBox="0 0 28 28"><text x="14" y="20" textAnchor="middle" fontSize="15" fontWeight="700" fill="#3040c0" fontFamily="Liberation Sans">RSI</text></svg>,
  <svg width="28" height="28" viewBox="0 0 28 28"><path d="M14 1l4 5h-8z" fill="#c02020" /><text x="14" y="23" textAnchor="middle" fontSize="19" fontWeight="700" fill="#c02020" fontFamily="Liberation Sans">S</text></svg>,
  <svg width="28" height="28" viewBox="0 0 28 28"><path d="M14 1l5 6h-3v5h5V9l6 5-6 5v-3h-5v5h3l-5 6-5-6h3v-5H7v3l-6-5 6-5v3h5V7H9z" fill="#1050c0" /></svg>,
  <svg width="28" height="28" viewBox="0 0 28 28"><path d="M5 21L21 5l4 4L9 25l-6 1z" fill="#f0b030" stroke="#a07040" /><path d="M21 5l4 4" stroke="#e06060" strokeWidth="3" /><path d="M3 26l2-5 4 4z" fill="#555" /></svg>,
];
const SIDE_TEXT = ["1", "5", "15", "30", "60"];
const SIDE_CN = ["周", "月", "N", "多", "季", "年"];

function Strip() {
  const cell = "h-[34.5px] flex items-center justify-center shrink-0";
  const sep = <div className="h-[12.5px] flex items-center justify-center shrink-0"><div className="w-[30px] h-[1.5px] bg-[#b0b0b0]" /></div>;
  return (
    <div className="w-[37px] h-full bg-[#f0f0f0] flex flex-col overflow-hidden shrink-0 pl-[1px] text-[16px] font-semibold text-[#1a4aa0]">
      {ICONS.map((ic, i) => <div key={i} className={cell}>{ic}</div>)}
      {sep}
      {ICONS2.map((ic, i) => <div key={i} className={cell}>{ic}</div>)}
      {sep}
      <div className={cell}><Box><Txt t="F5" /></Box></div>
      <div className={cell}><Box><path d="M7 14a7 7 0 0 1 12-5l2-2v7h-7l3-3a4 4 0 0 0-7 3z" fill="#30b060" /><path d="M21 14a7 7 0 0 1-12 5l-2 2v-7h7l-3 3a4 4 0 0 0 7-3z" fill="#80c080" /></Box></div>
      {SIDE_TEXT.map((t) => <div key={t} className={cell}>{t}</div>)}
      <div className="h-[39px] flex items-center justify-center shrink-0">
        <span className="w-[30px] h-[30px] bg-white border border-[#a0a0a0] flex items-center justify-center">日</span>
      </div>
      {SIDE_CN.map((t) => <div key={t} className={cell}>{t}</div>)}
    </div>
  );
}

function BottomBar() {
  const red = "text-[#f01818] font-semibold text-[20px]";
  const blk = "text-[#111] font-semibold text-[20px]";
  const cn = "text-[#222] text-[23px]";
  const it: [string, number, string][] = [
    ["上证", 54, cn], ["3263.80", 108, red], ["1.75", 69, red], ["0.05%", 86, red], ["3390亿", 95, blk],
    ["深证", 53, cn], ["11923.5", 102, red], ["45.68", 75, red], ["0.38%", 85, red], ["4323亿", 100, blk],
    ["中小", 51, cn], ["8132.86", 101, red], ["60.09", 75, red], ["0.74%", 86, red], ["613.9亿", 97, blk],
  ];
  return (
    <div className="h-[37px] bg-[#f0f0f0] flex items-center shrink-0 border-t border-[#d0d0d0] pt-[2px]">
      <div className="w-[25px] pl-[2px]">
        <svg width="20" height="24" viewBox="0 0 20 24"><rect x="1" y="1" width="18" height="22" rx="2" fill="#f8c860" stroke="#c08020" /><rect x="4" y="8" width="12" height="6" fill="#f0e8b0" /></svg>
      </div>
      {it.map((t, i) => (
        <span key={i} style={{ width: t[1] }} className={`${t[2]} whitespace-nowrap`}>{t[0]}</span>
      ))}
      <div className="h-[33px] border-l border-[#a0a0a0] pl-[5px] flex items-center">
        <span className="w-[82px] text-[23px] text-[#222] whitespace-nowrap">总成交</span>
        <span className={blk}>7</span>
      </div>
    </div>
  );
}

function Watermark() {
  return (
    <div className="absolute left-[1360px] top-[1314px] w-[800px] h-[81px] bg-[#7fabda] flex items-center z-20">
      <span className="ml-[17px] w-[295px] text-[56px] font-bold text-[#1a1488] tracking-[0.5px] whitespace-nowrap [font-family:'Noto_Sans_CJK_SC',sans-serif] leading-none">公式指标网</span>
      <svg width="80" height="81" viewBox="5 9 80 81" className="ml-[3px]">
        <path id="wmArc" d="M14 54A38 38 0 0 0 42 86" fill="none" />
        <path d="M16.8 48A34 34 0 0 1 41 12.5" fill="none" stroke="#d4604a" strokeWidth="8" />
        <path d="M60 12.5A34 34 0 0 1 84.7 48" fill="none" stroke="#d4604a" strokeWidth="8" />
        <path d="M84.7 50A34 34 0 0 1 45 79" fill="none" stroke="#e8c84a" strokeWidth="8" />
        <text fontSize="7.5" fontWeight="700" fill="#ffffff" fontFamily="Liberation Sans"><textPath href="#wmArc">www.9m8.cn</textPath></text>
        <path d="M43 11h14v14h9v23H35V25h8z" fill="#e8c84a" />
        <circle cx="50.5" cy="16" r="3" fill="#7fabda" />
        <path d="M40 33h21M44 33v15M57 33v15" stroke="#7fabda" strokeWidth="2" />
        <path d="M35 50h31v5H56v5h10v5H56v3l8 9H58v10H45V77h-7l8-9v-3H35v-5h10v-5H35z" fill="#e8c84a" />
        <path d="M50.5 66l4 11h-8z" fill="#7fabda" />
      </svg>
      <span className="ml-[24px] text-[63px] font-black text-white leading-none whitespace-nowrap [font-family:'Liberation_Serif',serif] [-webkit-text-stroke:1.5px_#fff]">www.9m8.cn</span>
    </div>
  );
}

function Ime() {
  return (
    <div className="absolute left-[1282px] top-[904px] w-[158px] h-[24px] bg-[#d4d0c8] border border-[#f0f0f0] shadow-[inset_-1px_-1px_0_#808080] flex items-center text-[17px] text-[#111] z-10">
      <span className="w-[22px] text-center text-[#800000] font-semibold border-r border-[#808080]">A</span>
      <span className="w-[70px] text-center whitespace-nowrap border-r border-[#808080] text-[16px] leading-[20px]">极品五笔</span>
      <span className="w-[20px] h-[20px] flex items-center justify-center border-r border-[#808080]">
        <svg width="12" height="14" viewBox="0 0 12 14"><path d="M7 1C3 3 3 9 9 10C7 13 2 13 1 9C0 5 3 2 7 1z" fill="#111" /></svg>
      </span>
      <span className="w-[20px] text-center border-r border-[#808080] text-[13px]">·,</span>
      <span className="flex-1 flex justify-center">
        <svg width="20" height="16" viewBox="0 0 20 16"><rect x="1" y="2" width="18" height="12" fill="#aaa" stroke="#666" /><path d="M3 5h14M3 8h14M3 11h14" stroke="#eee" strokeDasharray="1.5 1" /></svg>
      </span>
    </div>
  );
}

export default function App() {
  const row1: [string, number, string?][] = [["指标",45],["窗口",47],["MACD",62],["VOL-TDX",88],["CCI",44],["趋势动力",84],["主力监控",84],["私募主图",84],["MA2",45],["测试主图",85],["测试幅图A",94],["测试幅图B",97],["更多",48],["设置",48,"text-[#40e8f0]"]];
  const row2: [string, number, string?][] = [["扩展∧",61],["关联报价",84],["资金分布",85],["综合资讯",83,"text-[#c0c000]"],["行业资讯",84,"text-[#c0c000]"],["互动问答",84,"text-[#c0c000]"],["新用户福利专享",138]];
  return (
    <div className={`w-[2160px] h-[1395px] bg-black overflow-hidden relative flex flex-col ${FONT}`}>
      <TitleBar />
      <div className="flex-1 min-h-0 flex">
        <div className="w-[1788px] shrink-0 flex flex-col">
          <Toolbar />
          <InfoRow />
          <KChart />
          <div className="h-[2px] w-[540px] bg-[#a00000] -mt-[1px] shrink-0" />
          <VolHeader />
          <VolChart />
          <DateRow />
          <TabRow items={row1} cut />
          <TabRow items={row2} />
        </div>
        <RightPanel />
        <Strip />
      </div>
      <BottomBar />
      <Ime />
      <Watermark />
    </div>
  );
}
